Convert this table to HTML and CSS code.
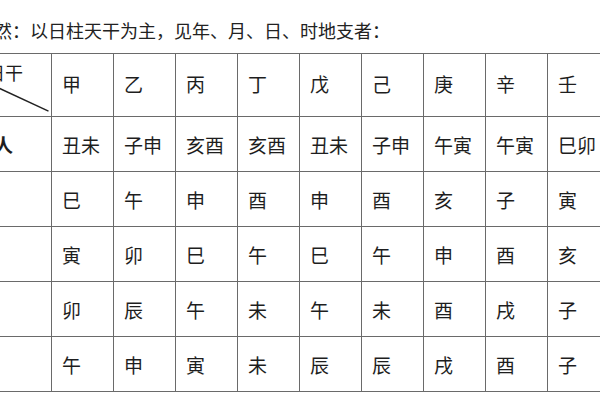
FILE: index.html
```html
<!DOCTYPE html>
<html lang="zh-CN">
<head>
<meta charset="utf-8">
<title>日干地支表</title>
<link rel="stylesheet" href="styles.css">
</head>
<body>
<div class="page">
  <p class="intro">然：以日柱天干为主，见年、月、日、时地支者：</p>
  <table class="grid">
    <colgroup>
      <col class="c-label">
      <col class="c-stem"><col class="c-stem"><col class="c-stem"><col class="c-stem"><col class="c-stem"><col class="c-stem"><col class="c-stem"><col class="c-stem"><col class="c-stem">
    </colgroup>
    <thead>
      <tr class="head">
        <th class="corner">
          <svg class="slash" viewBox="0 0 100 100" preserveAspectRatio="none" aria-hidden="true"><line x1="0" y1="0" x2="98" y2="92" stroke="#222" stroke-width="1.4" vector-effect="non-scaling-stroke"/></svg>
          <span class="corner-top">日干</span>
        </th>
        <th>甲</th><th>乙</th><th>丙</th><th>丁</th><th>戊</th><th>己</th><th>庚</th><th>辛</th><th>壬</th>
      </tr>
    </thead>
    <tbody>
      <tr>
        <th class="label">天乙贵人</th>
        <td>丑未</td><td>子申</td><td>亥酉</td><td>亥酉</td><td>丑未</td><td>子申</td><td>午寅</td><td>午寅</td><td>巳卯</td>
      </tr>
      <tr>
        <th class="label"></th>
        <td>巳</td><td>午</td><td>申</td><td>酉</td><td>申</td><td>酉</td><td>亥</td><td>子</td><td>寅</td>
      </tr>
      <tr>
        <th class="label"></th>
        <td>寅</td><td>卯</td><td>巳</td><td>午</td><td>巳</td><td>午</td><td>申</td><td>酉</td><td>亥</td>
      </tr>
      <tr>
        <th class="label"></th>
        <td>卯</td><td>辰</td><td>午</td><td>未</td><td>午</td><td>未</td><td>酉</td><td>戌</td><td>子</td>
      </tr>
      <tr>
        <th class="label"></th>
        <td>午</td><td>申</td><td>寅</td><td>未</td><td>辰</td><td>辰</td><td>戌</td><td>酉</td><td>子</td>
      </tr>
    </tbody>
  </table>
</div>
</body>
</html>
```

FILE: styles.css
```css
html, body {
  margin: 0;
  padding: 0;
  background: #ffffff;
}

body {
  font-family: "Noto Sans CJK SC", "Noto Sans", sans-serif;
  color: #1e1e1e;
}

.page {
  width: 600px;
  height: 400px;
  overflow: hidden;
}

.intro {
  margin: 18px 0 11px -6px;
  font-size: 18px;
  line-height: 24px;
  white-space: nowrap;
  color: #222;
}

.grid {
  border-collapse: collapse;
  table-layout: fixed;
  width: 685px;
  margin-left: -76px;
  font-size: 19px;
}

.c-label { width: 127px; }
.c-stem { width: 62px; }

.grid th,
.grid td {
  border: 1px solid #6a6a6a;
  padding: 2px 0 0 10px;
  text-align: left;
  font-weight: 400;
  vertical-align: middle;
  line-height: 24px;
  white-space: nowrap;
  overflow: hidden;
}

.grid tr { height: 55px; }
.grid tr.head { height: 63px; }

.grid tr.head th {
  padding: 0 0 3px 10px;
}

.grid tr.head th.corner {
  position: relative;
  vertical-align: top;
  padding: 8px 28px 0 0;
  text-align: right;
  font-size: 18px;
  line-height: 20px;
}

.slash {
  position: absolute;
  left: 0;
  top: 0;
  width: 100%;
  height: 100%;
}

.corner-top {
  position: relative;
}

.grid th.label {
  font-weight: 700;
  text-align: right;
  padding: 2px 38px 0 0;
}
```
